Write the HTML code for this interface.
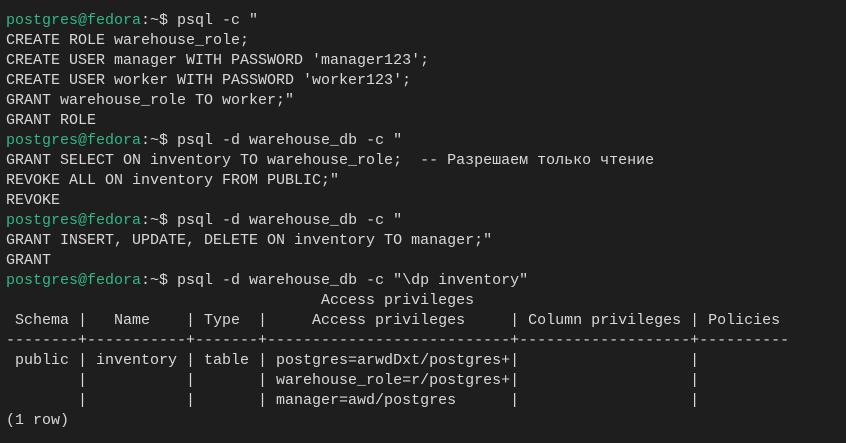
<!DOCTYPE html>
<html><head><meta charset="utf-8"><style>
html,body{margin:0;padding:0;background:#1e1e1e;width:846px;height:443px;overflow:hidden}
pre{margin:0;padding:11px 0 0 6px;font-family:"Liberation Mono","DejaVu Sans Mono",monospace;font-size:15px;line-height:20px;color:#d8d8d8;white-space:pre}
.g{color:#30b884}
</style></head><body><pre><span class="g">postgres@fedora</span>:~$ psql -c "
CREATE ROLE warehouse_role;
CREATE USER manager WITH PASSWORD 'manager123';
CREATE USER worker WITH PASSWORD 'worker123';
GRANT warehouse_role TO worker;"
GRANT ROLE
<span class="g">postgres@fedora</span>:~$ psql -d warehouse_db -c "
GRANT SELECT ON inventory TO warehouse_role;  -- Разрешаем только чтение
REVOKE ALL ON inventory FROM PUBLIC;"
REVOKE
<span class="g">postgres@fedora</span>:~$ psql -d warehouse_db -c "
GRANT INSERT, UPDATE, DELETE ON inventory TO manager;"
GRANT
<span class="g">postgres@fedora</span>:~$ psql -d warehouse_db -c "\dp inventory"
                                   Access privileges
 Schema |   Name    | Type  |     Access privileges     | Column privileges | Policies
--------+-----------+-------+---------------------------+-------------------+----------
 public | inventory | table | postgres=arwdDxt/postgres+|                   |
        |           |       | warehouse_role=r/postgres+|                   |
        |           |       | manager=awd/postgres      |                   |
(1 row)
</pre></body></html>
